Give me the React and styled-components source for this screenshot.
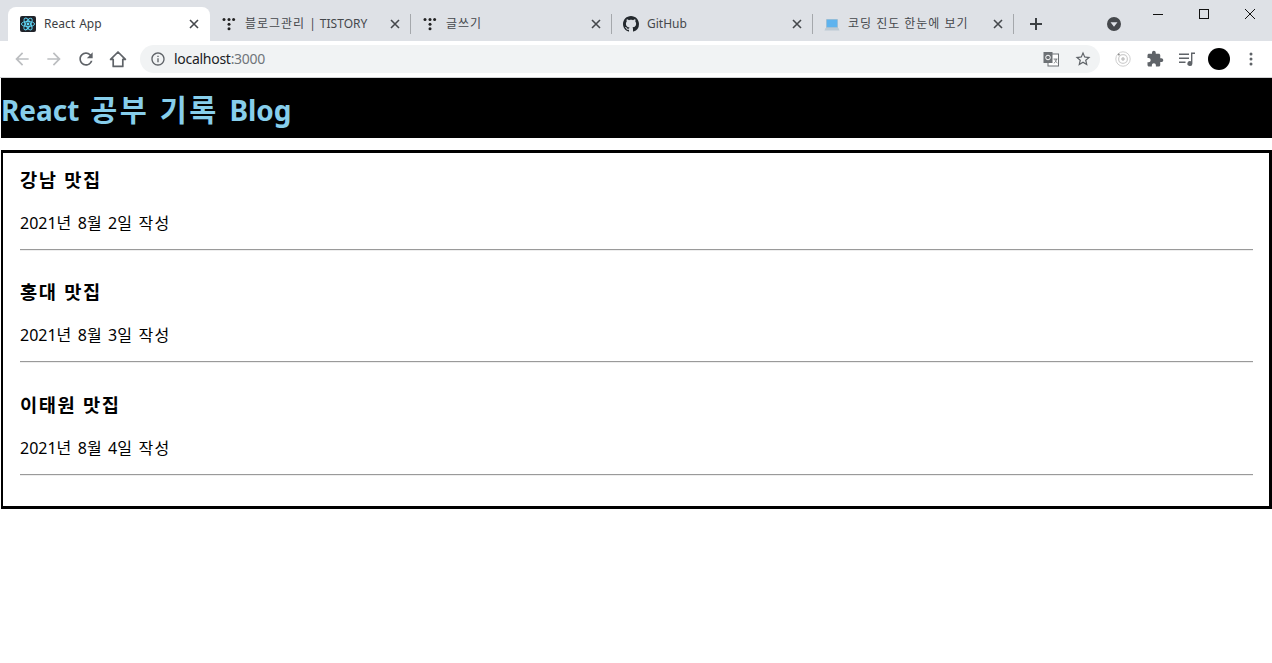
import React from 'react';
import styled, { createGlobalStyle } from 'styled-components';

const GlobalStyle = createGlobalStyle`
  html, body {
    margin: 0;
    padding: 0;
    background: #fff;
    font-family: "Noto Sans", "Noto Sans CJK KR", sans-serif;
  }
`;

const TabStrip = styled.div`
  display: flex;
  height: 41px;
  padding-left: 8px;
  background: #dee1e6;
  box-sizing: border-box;
`;

const Tab = styled.div`
  display: flex;
  align-items: center;
  width: ${(props) => (props.$active ? '202px' : '200px')};
  height: 34px;
  margin-top: 7px;
  padding: 0 ${(props) => (props.$active ? '8px' : '7px')} 0
    ${(props) => (props.$active ? '12px' : '11px')};
  box-sizing: border-box;
  background: ${(props) => (props.$active ? '#fff' : 'transparent')};
  border-radius: 8px 8px 0 0;
  color: ${(props) => (props.$active ? '#3c4043' : '#45484c')};
`;

const TabTitle = styled.span`
  flex: 1;
  margin-left: 8px;
  font-size: 12px;
  line-height: 16px;
  word-spacing: 1px;
  white-space: nowrap;
  overflow: hidden;
`;

const Favicon = styled.svg`
  flex: none;
  width: 16px;
  height: 16px;
  display: block;
`;

const TabClose = styled.svg`
  flex: none;
  width: 16px;
  height: 16px;
  stroke: #45484c;
  stroke-width: 1.6;
  fill: none;
`;

const TabDivider = styled.div`
  flex: none;
  width: 1px;
  height: 20px;
  margin-top: 14px;
  background: #a5a8ac;
`;

const NewTab = styled.div`
  flex: none;
  display: flex;
  align-items: center;
  justify-content: center;
  width: 28px;
  height: 34px;
  margin: 7px 0 0 8px;
`;

const ProfileDrop = styled.div`
  flex: none;
  display: flex;
  align-items: center;
  justify-content: center;
  width: 20px;
  height: 34px;
  margin: 7px 11px 0 auto;
`;

const WindowControls = styled.div`
  display: flex;
  flex: none;
  height: 27px;
`;

const WindowButton = styled.div`
  display: flex;
  align-items: center;
  justify-content: center;
  width: ${(props) => props.$w}px;
  height: 27px;
`;

const Toolbar = styled.div`
  display: flex;
  align-items: center;
  height: 37px;
  padding: 0 5px 1px 6px;
  box-sizing: border-box;
  background: #fff;
  border-bottom: 1px solid #d0d1d3;
`;

const ToolButton = styled.div`
  flex: none;
  display: flex;
  align-items: center;
  justify-content: center;
  width: 32px;
  height: 28px;
`;

const ToolIcon = styled.svg`
  display: block;
  width: ${(props) => props.$size || 16}px;
  height: ${(props) => props.$size || 16}px;
  fill: ${(props) => props.$color || '#5f6368'};
`;

const Omnibox = styled.div`
  flex: 1;
  display: flex;
  align-items: center;
  height: 28px;
  margin: 0 7px 0 6px;
  padding: 0 1px 0 10px;
  background: #f1f3f4;
  border-radius: 14px;
`;

const Url = styled.div`
  flex: 1;
  margin-left: 8px;
  font-size: 14px;
  line-height: 20px;
  letter-spacing: -0.28px;
  color: #70757a;
  b {
    font-weight: 400;
    color: #202124;
  }
`;

const Avatar = styled.div`
  width: 22px;
  height: 22px;
  border-radius: 50%;
  background: #000;
`;

const Page = styled.div`
  display: flex;
  flex-direction: column;
  padding-left: 1px;
`;

const HangulRun = styled.span`
  letter-spacing: 0.08em;
`;

const Header = styled.header`
  height: 60px;
  background: #000;
  color: #87ceeb;
  font-size: 28px;
  font-weight: 700;
  line-height: 64px;
  word-spacing: 3.5px;
  white-space: nowrap;

  ${HangulRun} {
    font-size: 1.05em;
  }
`;

const PostBox = styled.main`
  margin-top: 12px;
  height: 359px;
  padding: 1.7px 16px 0 17px;
  box-sizing: border-box;
  border: 3px solid #000;
  border-left-width: 2px;
`;

const Post = styled.article`
  height: 112.5px;
  box-sizing: border-box;
  padding-top: 12.3px;
`;

const PostTitle = styled.h3`
  margin: 0;
  font-size: 18.72px;
  font-weight: 700;
  line-height: 26px;
  word-spacing: 2px;
  color: #000;
`;

const PostDate = styled.p`
  margin: 18.7px 0 0;
  font-size: 16px;
  line-height: 22px;
  word-spacing: 1px;
  color: #000;
`;

const PostRule = styled.hr`
  margin: 15px 0 0;
  height: 0;
  border: 0;
  border-top: 1px solid #9a9a9a;
  border-bottom: 1px solid #eee;
`;

const posts = [
  { title: '강남 맛집', date: '2021년 8월 2일 작성' },
  { title: '홍대 맛집', date: '2021년 8월 3일 작성' },
  { title: '이태원 맛집', date: '2021년 8월 4일 작성' },
];

// Noto's hangul runs narrower than the reference's, so widen only those runs
const Korean = ({ children }) =>
  children
    .split(/([가-힣]+)/)
    .map((part, index) =>
      /[가-힣]/.test(part) ? <HangulRun key={index}>{part}</HangulRun> : part
    );

const ReactFavicon = () => (
  <Favicon viewBox="0 0 16 16">
    <rect width="16" height="16" rx="2" fill="#20232a" />
    <g fill="none" stroke="#61dafb" strokeWidth="0.9">
      <ellipse cx="8" cy="8" rx="6.6" ry="2.6" />
      <ellipse cx="8" cy="8" rx="6.6" ry="2.6" transform="rotate(60 8 8)" />
      <ellipse cx="8" cy="8" rx="6.6" ry="2.6" transform="rotate(120 8 8)" />
    </g>
    <circle cx="8" cy="8" r="1.4" fill="#61dafb" />
  </Favicon>
);

const TistoryFavicon = () => (
  <Favicon viewBox="0 0 16 16" fill="#222">
    <circle cx="3" cy="3.4" r="1.5" />
    <circle cx="8" cy="3.4" r="1.5" />
    <circle cx="12.6" cy="3.4" r="1.5" />
    <circle cx="8" cy="8.2" r="1.5" />
    <circle cx="8" cy="12.8" r="1.5" />
  </Favicon>
);

const GithubFavicon = () => (
  <Favicon viewBox="0 0 16 16" fill="#24292e">
    <path d="M8 0C3.58 0 0 3.58 0 8c0 3.54 2.29 6.53 5.47 7.59.4.07.55-.17.55-.38 0-.19-.01-.82-.01-1.49-2.01.37-2.53-.49-2.69-.94-.09-.23-.48-.94-.82-1.13-.28-.15-.68-.52-.01-.53.63-.01 1.08.58 1.23.82.72 1.21 1.87.87 2.33.66.07-.52.28-.87.51-1.07-1.78-.2-3.64-.89-3.64-3.95 0-.87.31-1.59.82-2.15-.08-.2-.36-1.02.08-2.12 0 0 .67-.21 2.2.82.64-.18 1.32-.27 2-.27.68 0 1.36.09 2 .27 1.53-1.04 2.2-.82 2.2-.82.44 1.1.16 1.92.08 2.12.51.56.82 1.27.82 2.15 0 3.07-1.87 3.75-3.65 3.95.29.25.54.73.54 1.48 0 1.07-.01 1.93-.01 2.2 0 .21.15.46.55.38A8.013 8.013 0 0016 8c0-4.42-3.58-8-8-8z" />
  </Favicon>
);

const LaptopFavicon = () => (
  <Favicon viewBox="0 0 16 16">
    <rect x="2" y="3" width="12" height="9" rx="0.6" fill="#b4c3ce" />
    <rect x="2.7" y="3.6" width="10.6" height="7.6" fill="#5eb3ee" />
    <path d="M1.5 12h13l1 2.5H.5z" fill="#bccad4" />
  </Favicon>
);

const CloseIcon = () => (
  <TabClose viewBox="0 0 16 16">
    <path d="M4 4l8 8M12 4l-8 8" />
  </TabClose>
);

const tabs = [
  { title: 'React App', icon: <ReactFavicon />, active: true },
  { title: '블로그관리 | TISTORY', icon: <TistoryFavicon /> },
  { title: '글쓰기', icon: <TistoryFavicon /> },
  { title: 'GitHub', icon: <GithubFavicon /> },
  { title: '코딩 진도 한눈에 보기', icon: <LaptopFavicon /> },
];

function BrowserChrome() {
  return (
    <>
      <TabStrip>
        {tabs.map((tab, index) => (
          <React.Fragment key={index}>
            <Tab $active={tab.active}>
              {tab.icon}
              <TabTitle>
                <Korean>{tab.title}</Korean>
              </TabTitle>
              <CloseIcon />
            </Tab>
            {!tab.active && <TabDivider />}
          </React.Fragment>
        ))}
        <NewTab>
          <ToolIcon viewBox="0 0 16 16" $color="#3c4043">
            <path d="M7 2h2v5h5v2H9v5H7V9H2V7h5z" />
          </ToolIcon>
        </NewTab>
        <ProfileDrop>
          <ToolIcon viewBox="0 0 16 16" $color="#45484c">
            <path d="M8 1a7 7 0 100 14A7 7 0 008 1zM4.5 6.3h7L8 10.8z" fillRule="evenodd" />
          </ToolIcon>
        </ProfileDrop>
        <WindowControls>
          <WindowButton $w={46}>
            <svg width="10" height="10" viewBox="0 0 10 10">
              <path d="M0 5.5h10" stroke="#111" fill="none" />
            </svg>
          </WindowButton>
          <WindowButton $w={46}>
            <svg width="10" height="10" viewBox="0 0 10 10">
              <rect x="0.5" y="0.5" width="9" height="9" stroke="#111" fill="none" />
            </svg>
          </WindowButton>
          <WindowButton $w={45}>
            <svg width="10" height="10" viewBox="0 0 10 10">
              <path d="M0 0l10 10M10 0L0 10" stroke="#111" fill="none" />
            </svg>
          </WindowButton>
        </WindowControls>
      </TabStrip>
      <Toolbar>
        <ToolButton>
          <ToolIcon viewBox="0 0 24 24" $size={20} $color="#bcbec1">
            <path d="M20 11H7.83l5.59-5.59L12 4l-8 8 8 8 1.41-1.41L7.83 13H20v-2z" />
          </ToolIcon>
        </ToolButton>
        <ToolButton>
          <ToolIcon viewBox="0 0 24 24" $size={20} $color="#bcbec1">
            <path d="M4 11h12.17l-5.59-5.59L12 4l8 8-8 8-1.41-1.41L16.17 13H4v-2z" />
          </ToolIcon>
        </ToolButton>
        <ToolButton>
          <ToolIcon viewBox="0 0 24 24" $size={20}>
            <path d="M17.65 6.35A7.958 7.958 0 0012 4c-4.42 0-7.99 3.58-7.99 8s3.57 8 7.99 8c3.73 0 6.84-2.55 7.73-6h-2.08A5.99 5.99 0 0112 18c-3.31 0-6-2.69-6-6s2.69-6 6-6c1.66 0 3.14.69 4.22 1.78L13 11h7V4l-2.35 2.35z" />
          </ToolIcon>
        </ToolButton>
        <ToolButton>
          <svg width="18" height="18" viewBox="0 0 18 18" fill="none" stroke="#5f6368" strokeWidth="1.7">
            <path d="M1.6 9.4L9 2l7.4 7.4h-2.6v7H4.2v-7z" strokeLinejoin="round" />
          </svg>
        </ToolButton>
        <Omnibox>
          <ToolIcon viewBox="0 0 24 24">
            <path d="M11 7h2v2h-2zm0 4h2v6h-2zm1-9C6.48 2 2 6.48 2 12s4.48 10 10 10 10-4.48 10-10S17.52 2 12 2zm0 18c-4.41 0-8-3.59-8-8s3.59-8 8-8 8 3.59 8 8-3.59 8-8 8z" />
          </ToolIcon>
          <Url>
            <b>localhost</b>:3000
          </Url>
          <ToolButton>
            <svg width="16" height="16" viewBox="0 0 16 16">
              <rect x="5" y="3" width="10.5" height="12" fill="#fff" stroke="#6d7175" />
              <rect x="0.5" y="1" width="9" height="11" fill="#6d7175" />
              <circle cx="5" cy="6.5" r="2.3" fill="none" stroke="#fff" />
              <path d="M10.5 8h4M12 8c.2 2 1 3.4 2.4 4M13.6 8c-.3 2-1.2 3.4-2.8 4.2" stroke="#6d7175" fill="none" strokeWidth="0.8" />
            </svg>
          </ToolButton>
          <ToolButton>
            <ToolIcon viewBox="0 0 24 24" $size={18}>
              <path d="M22 9.24l-7.19-.62L12 2 9.19 8.63 2 9.24l5.46 4.73L5.82 21 12 17.27 18.18 21l-1.63-7.03L22 9.24zM12 15.4l-3.76 2.27 1-4.28-3.32-2.88 4.38-.38L12 6.1l1.71 4.04 4.38.38-3.32 2.88 1 4.28L12 15.4z" />
            </ToolIcon>
          </ToolButton>
        </Omnibox>
        <ToolButton>
          <svg width="16" height="16" viewBox="0 0 16 16" fill="none" stroke="#cfcfcf">
            <circle cx="8" cy="8" r="7.2" />
            <circle cx="8" cy="8" r="4.4" strokeWidth="1.3" />
            <circle cx="8" cy="8" r="1.4" fill="#bdbdbd" />
            <circle cx="3.8" cy="3.4" r="1" fill="#8d8d8d" stroke="none" />
          </svg>
        </ToolButton>
        <ToolButton>
          <ToolIcon viewBox="0 0 24 24" $size={18}>
            <path d="M20.5 11H19V7c0-1.1-.9-2-2-2h-4V3.5C13 2.12 11.88 1 10.5 1S8 2.12 8 3.5V5H4c-1.1 0-1.99.9-1.99 2v3.8H3.5c1.49 0 2.7 1.21 2.7 2.7s-1.21 2.7-2.7 2.7H2V20c0 1.1.9 2 2 2h3.8v-1.5c0-1.49 1.21-2.7 2.7-2.7 1.49 0 2.7 1.21 2.7 2.7V22H17c1.1 0 2-.9 2-2v-4h1.5c1.38 0 2.5-1.12 2.5-2.5S21.88 11 20.5 11z" />
          </ToolIcon>
        </ToolButton>
        <ToolButton>
          <ToolIcon viewBox="0 0 16 16">
            <path d="M0 2.5h10v1.4H0zM0 6.5h10v1.4H0zM0 10.5h6.5v1.4H0zM12 1.5h4v1.6h-2.6v9.4a2.5 2.5 0 11-1.4-2.2z" />
          </ToolIcon>
        </ToolButton>
        <ToolButton>
          <Avatar />
        </ToolButton>
        <ToolButton>
          <ToolIcon viewBox="0 0 16 16">
            <circle cx="8" cy="3" r="1.5" />
            <circle cx="8" cy="8" r="1.5" />
            <circle cx="8" cy="13" r="1.5" />
          </ToolIcon>
        </ToolButton>
      </Toolbar>
    </>
  );
}

export default function App() {
  return (
    <>
      <GlobalStyle />
      <BrowserChrome />
      <Page>
        <Header>
          <Korean>React 공부 기록 Blog</Korean>
        </Header>
        <PostBox>
          {posts.map((post, index) => (
            <Post key={index}>
              <PostTitle>
                <Korean>{post.title}</Korean>
              </PostTitle>
              <PostDate>
                <Korean>{post.date}</Korean>
              </PostDate>
              <PostRule />
            </Post>
          ))}
        </PostBox>
      </Page>
    </>
  );
}
